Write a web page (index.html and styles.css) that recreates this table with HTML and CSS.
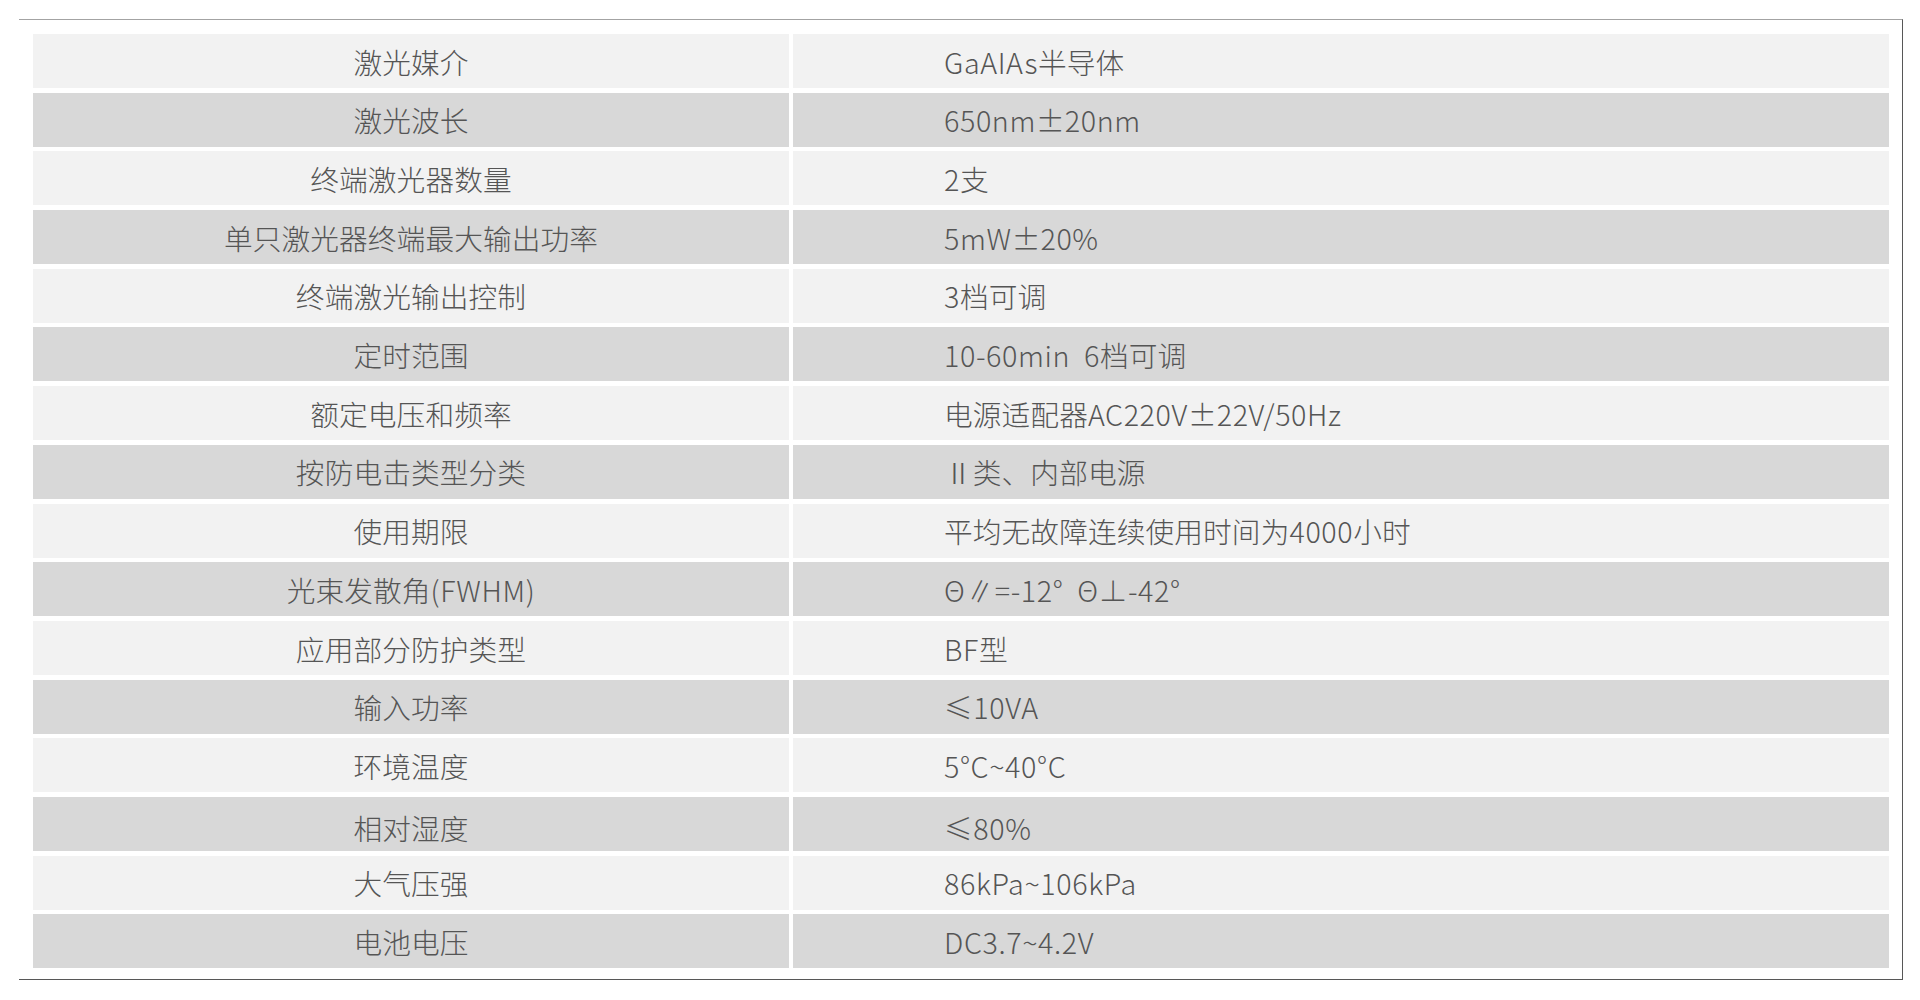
FILE: index.html
```html
<!DOCTYPE html>
<html lang="zh-CN">
<head>
<meta charset="utf-8">
<title>技术参数</title>
<link rel="stylesheet" href="styles.css">
</head>
<body>
<div class="frame">
  <div class="spec-table">
    <div class="row light"><div class="cell label">激光媒介</div><div class="cell value"><span class="lat">GaAIAs</span>半导体</div></div>
    <div class="row dark"><div class="cell label">激光波长</div><div class="cell value"><span class="lat">650nm</span>±<span class="lat">20nm</span></div></div>
    <div class="row light"><div class="cell label">终端激光器数量</div><div class="cell value"><span class="lat">2</span>支</div></div>
    <div class="row dark"><div class="cell label">单只激光器终端最大输出功率</div><div class="cell value"><span class="lat">5mW</span>±<span class="lat">20%</span></div></div>
    <div class="row light"><div class="cell label">终端激光输出控制</div><div class="cell value"><span class="lat">3</span>档可调</div></div>
    <div class="row dark"><div class="cell label">定时范围</div><div class="cell value"><span class="lat">10-60min&nbsp;&nbsp;6</span>档可调</div></div>
    <div class="row light"><div class="cell label">额定电压和频率</div><div class="cell value">电源适配器<span class="lat">AC220V</span>±<span class="lat">22V/50Hz</span></div></div>
    <div class="row dark"><div class="cell label">按防电击类型分类</div><div class="cell value">Ⅱ类、内部电源</div></div>
    <div class="row light"><div class="cell label">使用期限</div><div class="cell value">平均无故障连续使用时间为<span class="lat">4000</span>小时</div></div>
    <div class="row dark"><div class="cell label">光束发散角<span class="lat">(FWHM)</span></div><div class="cell value"><span class="lat">Θ∥=-12°&nbsp;&nbsp;Θ⊥-42°</span></div></div>
    <div class="row light"><div class="cell label">应用部分防护类型</div><div class="cell value"><span class="lat">BF</span>型</div></div>
    <div class="row dark"><div class="cell label">输入功率</div><div class="cell value"><span class="lat">≤10VA</span></div></div>
    <div class="row light"><div class="cell label">环境温度</div><div class="cell value"><span class="lat">5°C~40°C</span></div></div>
    <div class="row dark low"><div class="cell label">相对湿度</div><div class="cell value"><span class="lat">≤80%</span></div></div>
    <div class="row light"><div class="cell label">大气压强</div><div class="cell value"><span class="lat">86kPa~106kPa</span></div></div>
    <div class="row dark"><div class="cell label">电池电压</div><div class="cell value"><span class="lat">DC3.7~4.2V</span></div></div>
  </div>
</div>
</body>
</html>
```

FILE: styles.css
```css
html, body {
  margin: 0;
  padding: 0;
  background: #ffffff;
}

body {
  font-family: "Noto Sans CJK SC Light", "Noto Sans CJK SC DemiLight", "Noto Sans CJK SC", "Noto Sans", sans-serif;
  color: #555555;
}

.frame {
  box-sizing: border-box;
  width: 1884px;
  margin: 19px 0 0 19px;
  padding: 14px 13px 11px 14px;
  border-top: 1px solid #a3a3a3;
  border-right: 1px solid #575757;
  border-bottom: 1px solid #575757;
}

.spec-table {
  display: flex;
  flex-direction: column;
  gap: 4.7px;
}

.row {
  display: grid;
  grid-template-columns: 756px 1096px;
  column-gap: 4px;
  height: 54px;
}

.cell {
  box-sizing: border-box;
  display: flex;
  align-items: center;
  padding-top: 2px;
  font-size: 28.7px;
  font-weight: 300;
  line-height: 1;
  letter-spacing: 0.1px;
  white-space: nowrap;
}

.lat {
  letter-spacing: 0.6px;
}

.row.low .cell {
  padding-top: 9px;
}

.row.light .cell {
  background: #f2f2f2;
}

.row.dark .cell {
  background: #d8d8d8;
}

.label {
  justify-content: center;
}

.value {
  padding-left: 151px;
}
```
